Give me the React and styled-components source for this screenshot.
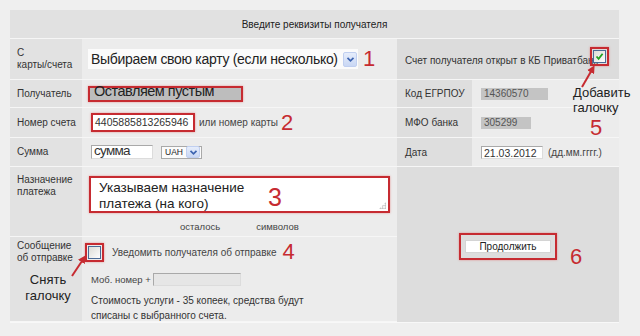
import styled, { createGlobalStyle } from "styled-components";

const RED = "#c62b31";

const Global = createGlobalStyle`
  body {
    margin: 0;
    background: #efefef;
    font-family: "Liberation Sans", Arial, sans-serif;
    color: #333;
  }
`;

const Page = styled.div`
  width: 640px;
  height: 336px;
  padding: 10px 0 0 10px;
  box-sizing: border-box;
  overflow: hidden;
`;

const Panel = styled.div`
  position: relative;
  width: 609px;
  display: grid;
  grid-template-columns: 72px 315px 75px 147px;
  grid-template-rows: 29px 41px 28px 30px 29px 70px 85px;
  border-bottom: 1px solid #f8f8f8;
  font-size: 10px;
`;

const Cell = styled.div`
  box-sizing: border-box;
  border-bottom: 1px solid #f6f6f6;
  display: flex;
  position: relative;
  white-space: nowrap;
`;

const Header = styled(Cell)`
  grid-column: 1 / -1;
  background: #e1e1e1;
  align-items: center;
  justify-content: center;
  color: #222;
`;

const Label = styled(Cell)`
  background: #e2e2e2;
  flex-direction: column;
  justify-content: ${(p) => (p.$top ? "flex-start" : "center")};
  padding: ${(p) => (p.$top ? `${p.$top}px 7px 0` : "0 7px")};
  line-height: 12px;
`;

const Field = styled(Cell)`
  background: #ececec;
  padding: ${(p) => (p.$top ? `${p.$top}px 0 0 6px` : "0 0 0 6px")};
  flex-direction: ${(p) => (p.$column ? "column" : "row")};
  align-items: ${(p) => (p.$column ? "flex-start" : "center")};
`;

const RightLabel = styled(Cell)`
  background: #dedede;
  align-items: center;
  padding-left: 8px;
`;

const RightField = styled(Cell)`
  background: #ececec;
  align-items: center;
  padding-left: 9px;
`;

const RightWide = styled(Cell)`
  grid-column: 3 / 5;
  background: #dcdcdc;
  align-items: center;
  padding: 3px 0 0 8px;
`;

const RightBottom = styled(Cell)`
  grid-column: 3 / 5;
  grid-row: 6 / 8;
  background: #dddddd;
  justify-content: center;
  align-items: flex-start;
  padding-top: 66px;
  border-bottom: none;
`;

const Num = styled.span`
  color: ${RED};
  font-size: ${(p) => p.$size || 22}px;
  line-height: 1;
  margin-left: ${(p) => p.$gap || 0}px;
`;

const FloatNum = styled(Num)`
  position: absolute;
  left: ${(p) => p.$x}px;
  top: ${(p) => p.$y}px;
`;

const Note = styled.div`
  position: absolute;
  left: ${(p) => p.$x}px;
  top: ${(p) => p.$y}px;
  font-size: 13px;
  line-height: 15px;
  color: #222;
  z-index: 2;
`;

const NoteFlow = styled.div`
  margin-top: 8px;
  padding-left: 4px;
  text-align: center;
  font-size: 13px;
  line-height: 16px;
  color: #222;
`;

const RedFrame = styled.span`
  display: inline-flex;
  align-items: center;
  justify-content: center;
  border: 2px solid ${RED};
  box-shadow: 0 0 2px rgba(230, 90, 90, 0.6);
  padding: ${(p) => p.$pad || "0"};
  margin-left: ${(p) => p.$ml || 0}px;
`;

const Select = styled.div`
  display: flex;
  align-items: center;
  justify-content: space-between;
  width: ${(p) => p.$w}px;
  height: ${(p) => p.$h}px;
  box-sizing: border-box;
  background: #fbfbfb;
  border: ${(p) => (p.$border ? "1px solid #a9a9a9" : "none")};
  font-size: ${(p) => p.$fs}px;
  letter-spacing: ${(p) => p.$ls || 0}px;
  color: #222;
  padding: 0 1px 0 3px;
  margin-left: ${(p) => p.$ml || 0}px;
`;

const DropBtn = styled.span`
  width: ${(p) => p.$w}px;
  height: ${(p) => p.$h}px;
  background: linear-gradient(#e6edfb, #c9d7f4);
  border: 1px solid #c0cff0;
  border-radius: 2px;
  display: flex;
  align-items: center;
  justify-content: center;
`;

const GrayInput = styled.span`
  display: block;
  width: ${(p) => p.$w}px;
  height: ${(p) => p.$h}px;
  background: #c4c4c4;
  color: #555;
  font-size: 10px;
  line-height: ${(p) => p.$h}px;
  padding-left: 3px;
  box-sizing: border-box;
`;

const BigGray = styled.span`
  display: block;
  width: 151px;
  height: 12px;
  background: #bdbdbd;
  font-size: 14.5px;
  letter-spacing: -0.5px;
  line-height: 12px;
  color: #222;
  padding-left: 4px;
  box-sizing: border-box;
  span {
    position: relative;
    top: -3px;
  }
`;

const TextInput = styled.span`
  display: block;
  width: ${(p) => p.$w}px;
  height: ${(p) => p.$h}px;
  background: ${(p) => p.$bg || "#fff"};
  border: ${(p) => (p.$border ? "1px solid #a9a9a9" : "none")};
  border-bottom-color: #dcdcdc;
  border-right-color: #dcdcdc;
  box-sizing: border-box;
  font-size: ${(p) => p.$fs || 10.5}px;
  letter-spacing: ${(p) => p.$ls || 0}px;
  line-height: ${(p) => p.$lh || p.$h}px;
  color: #333;
  padding-left: 2px;
  overflow: visible;
  margin-left: ${(p) => p.$ml || 0}px;
`;

const Hint = styled.span`
  margin-left: ${(p) => p.$ml || 4}px;
  color: #444;
  font-size: ${(p) => p.$fs || 10}px;
`;

const TextArea = styled.div`
  position: relative;
  width: 301px;
  height: 37px;
  box-sizing: border-box;
  margin-left: 1px;
  background: #fff;
  border: 2px solid ${RED};
  box-shadow: 0 0 2px rgba(230, 90, 90, 0.6);
  font-size: 13.5px;
  line-height: 16px;
  color: #222;
  padding: 2px 0 0 8px;
`;

const Grip = styled.span`
  position: absolute;
  right: 2px;
  bottom: 2px;
  width: 7px;
  height: 7px;
  background: radial-gradient(circle, #b9b9b9 0.8px, transparent 1px) 0 0 / 2.5px 2.5px;
  clip-path: polygon(100% 0, 100% 100%, 0 100%);
`;

const Counter = styled.div`
  display: flex;
  margin-top: 8px;
  padding-left: 92px;
  font-size: 9.5px;
  color: #444;
  span + span {
    margin-left: 36px;
  }
`;

const Line = styled.div`
  display: flex;
  align-items: center;
  margin-top: ${(p) => p.$mt || 0}px;
  margin-left: ${(p) => p.$ml || 0}px;
`;

const Fine = styled.div`
  margin: 7px 0 0 3px;
  font-size: 10px;
  line-height: 15px;
  color: #333;
`;

const Box = styled.span`
  width: 13px;
  height: 13px;
  box-sizing: border-box;
  border: 1px solid #4a6a95;
  background: linear-gradient(135deg, #dcdcd6, #fdfdfd);
  display: flex;
  align-items: center;
  justify-content: center;
`;

const CheckSpot = styled.span`
  position: absolute;
  right: 10px;
  top: 8px;
`;

const ButtonWrap = styled.div`
  position: relative;
`;

const Button = styled.span`
  display: block;
  width: 86px;
  height: 13px;
  background: #fff;
  border: 1px solid #d4d4d4;
  box-sizing: border-box;
  font-size: 10px;
  line-height: 11px;
  text-align: center;
  color: #222;
`;

const Arrows = styled.svg`
  position: absolute;
  left: 0;
  top: 0;
  width: 609px;
  height: 312px;
  pointer-events: none;
  z-index: 3;
`;

const Chevron = () => (
  <svg width="9" height="7" viewBox="0 0 9 7">
    <path d="M1.5 1.8 L4.5 4.8 L7.5 1.8" fill="none" stroke="#3d64b0" strokeWidth="1.7" />
  </svg>
);

const Tick = () => (
  <svg width="9" height="9" viewBox="0 0 9 9">
    <path d="M1.5 4.5 L3.6 6.8 L7.6 1.8" fill="none" stroke="#21a121" strokeWidth="1.8" />
  </svg>
);

export default function App() {
  return (
    <Page>
      <Global />
      <Panel>
        <Header>Введите реквизиты получателя</Header>

        <Label>
          <span>С</span>
          <span>карты/счета</span>
        </Label>
        <Field>
          <Select $w={270} $h={20} $fs={14} $ls={-0.3}>
            Выбираем свою карту (если несколько)
            <DropBtn $w={12} $h={13}>
              <Chevron />
            </DropBtn>
          </Select>
          <Num $gap={5}>1</Num>
        </Field>
        <RightWide>
          Счет получателя открыт в КБ Приватбанк
          <CheckSpot>
            <RedFrame $pad="1px">
              <Box>
                <Tick />
              </Box>
            </RedFrame>
          </CheckSpot>
        </RightWide>

        <Label>Получатель</Label>
        <Field>
          <RedFrame>
            <BigGray>
              <span>Оставляем пустым</span>
            </BigGray>
          </RedFrame>
        </Field>
        <RightLabel>Код ЕГРПОУ</RightLabel>
        <RightField>
          <GrayInput $w={67} $h={12}>14360570</GrayInput>
          <Note $x={101} $y={5}>
            Добавить
            <br />
            галочку
          </Note>
        </RightField>

        <Label>Номер счета</Label>
        <Field>
          <RedFrame $ml={3}>
            <TextInput $w={100} $h={15} $fs={10.5}>
              4405885813265946
            </TextInput>
          </RedFrame>
          <Hint>или номер карты</Hint>
          <Num $gap={3}>2</Num>
        </Field>
        <RightLabel>МФО банка</RightLabel>
        <RightField>
          <GrayInput $w={50} $h={12}>305299</GrayInput>
          <FloatNum $x={118} $y={9}>5</FloatNum>
        </RightField>

        <Label>Сумма</Label>
        <Field>
          <TextInput $w={62} $h={14} $fs={13.5} $ls={-0.7} $lh={10} $ml={3} $border>
            сумма
          </TextInput>
          <Select $w={41} $h={13} $fs={8.5} $ml={8} $border>
            UAH
            <DropBtn $w={12} $h={10}>
              <Chevron />
            </DropBtn>
          </Select>
        </Field>
        <RightLabel>Дата</RightLabel>
        <RightField>
          <TextInput $w={62} $h={13} $fs={10.5} $border>
            21.03.2012
          </TextInput>
          <Hint $ml={5}>(дд.мм.гггг.)</Hint>
        </RightField>

        <Label $top={7}>
          <span>Назначение</span>
          <span>платежа</span>
        </Label>
        <Field $column $top={9}>
          <TextArea>
            Указываем назначение
            <br />
            платежа (на кого)
            <FloatNum $x={177} $y={7} $size={25}>
              3
            </FloatNum>
            <Grip />
          </TextArea>
          <Counter>
            <span>осталось</span>
            <span>символов</span>
          </Counter>
        </Field>
        <RightBottom>
          <ButtonWrap>
            <RedFrame $pad="5px 4px">
              <Button>Продолжить</Button>
            </RedFrame>
            <FloatNum $x={111} $y={13}>6</FloatNum>
          </ButtonWrap>
        </RightBottom>

        <Label $top={3}>
          <span>Сообщение</span>
          <span>об отправке</span>
          <NoteFlow>
            Снять
            <br />
            галочку
          </NoteFlow>
        </Label>
        <Field $column $top={4}>
          <Line $ml={-3}>
            <RedFrame $pad="1px">
              <Box />
            </RedFrame>
            <Hint $ml={8}>Уведомить получателя об отправке</Hint>
            <Num $gap={6}>4</Num>
          </Line>
          <Line $mt={10} $ml={-1}>
            <Hint $ml={0} $fs={9.5}>Моб. номер +</Hint>
            <TextInput $w={88} $h={13} $ml={2} $bg="#e6e6e6" $border />
          </Line>
          <Fine>
            Стоимость услуги - 35 копеек, средства будут
            <br />
            списаны с выбранного счета.
          </Fine>
        </Field>

        <Arrows viewBox="0 0 609 312">
          <defs>
            <marker id="head" viewBox="0 0 10 10" refX="6" refY="5" markerWidth="4" markerHeight="4" orient="auto">
              <path d="M0 0 L10 5 L0 10 z" fill={RED} />
            </marker>
          </defs>
          <line x1="572" y1="77" x2="583" y2="58" stroke={RED} strokeWidth="2" markerEnd="url(#head)" />
          <line x1="62" y1="266" x2="74" y2="248" stroke={RED} strokeWidth="2" markerEnd="url(#head)" />
        </Arrows>
      </Panel>
    </Page>
  );
}
